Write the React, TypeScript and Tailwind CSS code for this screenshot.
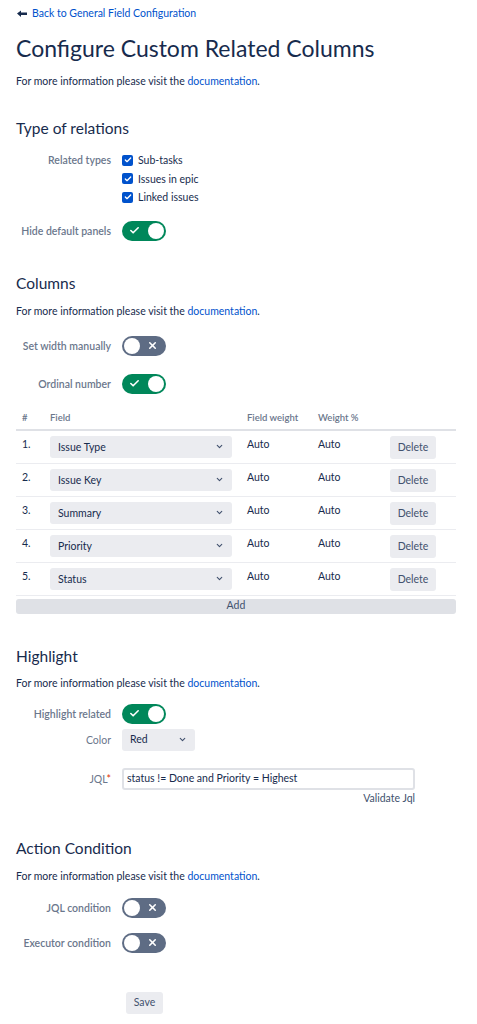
import { Check, X, ChevronDown } from 'lucide-react';

const FONT = { fontFamily: 'Lato, "Noto Sans", sans-serif' };

const ROWS = ['Issue Type', 'Issue Key', 'Summary', 'Priority', 'Status'];

function Toggle({ on }: { on: boolean }) {
  return on ? (
    <div className="flex h-[20px] w-[44px] items-center justify-between rounded-full bg-[#00875a] pl-[7px] pr-[2px]">
      <Check className="h-[11px] w-[11px] text-white" strokeWidth={3.5} />
      <div className="h-[16px] w-[16px] rounded-full bg-white" />
    </div>
  ) : (
    <div className="flex h-[20px] w-[44px] items-center justify-between rounded-full bg-[#5e6c84] pl-[2px] pr-[8px]">
      <div className="h-[16px] w-[16px] rounded-full bg-white" />
      <X className="h-[11px] w-[11px] text-white" strokeWidth={3.5} />
    </div>
  );
}

function Row({ label, children, className = '' }: { label: React.ReactNode; children: React.ReactNode; className?: string }) {
  return (
    <div className={`flex items-center ${className}`}>
      <div className="w-[95px] shrink-0 whitespace-nowrap text-right text-[10.5px] font-semibold leading-[16px] text-[#6b778c]">{label}</div>
      <div className="ml-[11px]">{children}</div>
    </div>
  );
}

function DocLine({ className = '' }: { className?: string }) {
  return (
    <p className={`text-[10.5px] leading-[16px] text-[#172b4d] ${className}`}>
      For more information please visit the <span className="text-[#0052cc]">documentation</span>.
    </p>
  );
}

function Heading({ children, className = '' }: { children: React.ReactNode; className?: string }) {
  return <h2 className={`text-[15.5px] leading-[22px] text-[#172b4d] ${className}`}>{children}</h2>;
}

function CheckBox({ label }: { label: string }) {
  return (
    <div className="flex h-[18.5px] items-center gap-[5px]">
      <div className="flex h-[11px] w-[11px] items-center justify-center rounded-[2px] bg-[#0052cc]">
        <Check className="h-[8px] w-[8px] text-white" strokeWidth={4} />
      </div>
      <span className="text-[10.5px] leading-[16px] text-[#172b4d]">{label}</span>
    </div>
  );
}

export default function App() {
  return (
    <div style={FONT} className="min-h-[1024px] bg-white px-[16px] pt-[6px] text-[#172b4d]">
      <div className="flex h-[16px] items-center gap-[5px] pl-[1px] text-[10.5px] text-[#0052cc]">
        <svg width="10" height="8" viewBox="0 0 10 8" className="text-[#172b4d]">
          <path d="M0 3.5 L4 0.5 V2.5 H10 V5 H4 V7 Z" fill="currentColor" />
        </svg>
        <span>Back to General Field Configuration</span>
      </div>

      <h1 className="mt-[11px] text-[23px] leading-[30px] text-[#172b4d]">Configure Custom Related Columns</h1>
      <DocLine className="mt-[10px]" />

      <Heading className="mt-[28px]">Type of relations</Heading>
      <div className="mt-[12px] flex">
        <div className="w-[95px] whitespace-nowrap pt-[1px] text-right text-[10.5px] font-semibold leading-[16px] text-[#6b778c]">
          Related types
        </div>
        <div className="ml-[11px]">
          <CheckBox label="Sub-tasks" />
          <CheckBox label="Issues in epic" />
          <CheckBox label="Linked issues" />
        </div>
      </div>
      <Row label="Hide default panels" className="mt-[14px]">
        <Toggle on />
      </Row>

      <Heading className="mt-[31px]">Columns</Heading>
      <DocLine className="mt-[9px]" />
      <Row label="Set width manually" className="mt-[17px]">
        <Toggle on={false} />
      </Row>
      <Row label="Ordinal number" className="mt-[18px]">
        <Toggle on />
      </Row>

      <div className="mt-[15px] w-[440px]">
        <div className="flex h-[22px] items-center border-b-2 border-[#dfe1e6] text-[9.5px] font-semibold text-[#6b778c]">
          <div className="w-[34px] pl-[6px]">#</div>
          <div className="w-[197px]">Field</div>
          <div className="w-[71px]">Field weight</div>
          <div>Weight %</div>
        </div>
        {ROWS.map((r, i) => (
          <div key={r} className="flex h-[33px] border-b border-[#ebecf0] pt-[5px] text-[10.5px] leading-[16px]">
            <div className="w-[34px] pl-[6px]">{i + 1}.</div>
            <div className="flex h-[22px] w-[182px] items-center justify-between rounded-[3px] bg-[#ebecf0] pl-[8px] pr-[8px]">
              <span>{r}</span>
              <ChevronDown className="h-[9px] w-[9px] text-[#42526e]" strokeWidth={3} />
            </div>
            <div className="ml-[15px] w-[71px]">Auto</div>
            <div className="w-[72px]">Auto</div>
            <div className="flex h-[23px] w-[46px] items-center justify-center rounded-[3px] bg-[#ebecf0] text-[#42526e]">Delete</div>
          </div>
        ))}
        <div className="mt-[3px] flex h-[15px] w-[440px] items-center justify-center rounded-[3px] bg-[#dfe1e6] text-[10.5px] text-[#42526e]">
          Add
        </div>
      </div>

      <Heading className="mt-[31px]">Highlight</Heading>
      <DocLine className="mt-[8px]" />
      <Row label="Highlight related" className="mt-[13px]">
        <Toggle on />
      </Row>
      <Row label={<span className="font-normal">Color</span>} className="mt-[5px]">
        <div className="flex h-[22px] w-[73px] items-center justify-between rounded-[3px] bg-[#ebecf0] px-[8px] text-[10.5px]">
          <span>Red</span>
          <ChevronDown className="h-[9px] w-[9px] text-[#42526e]" strokeWidth={3} />
        </div>
      </Row>
      <div className="mt-[17px] flex">
        <div className="w-[95px] pt-[3px] text-right text-[10.5px] leading-[16px] text-[#6b778c]">
          JQL<span className="text-[#de350b]">*</span>
        </div>
        <div className="ml-[11px] w-[293px]">
          <div className="flex h-[22px] items-center rounded-[3px] border-2 border-[#dfe1e6] px-[3px] text-[10.5px]">
            status != Done and Priority = Highest
          </div>
          <div className="text-right text-[10.5px] leading-[16px] text-[#42526e]">Validate Jql</div>
        </div>
      </div>

      <Heading className="mt-[31px]">Action Condition</Heading>
      <DocLine className="mt-[9px]" />
      <Row label="JQL condition" className="mt-[14px]">
        <Toggle on={false} />
      </Row>
      <Row label="Executor condition" className="mt-[15px]">
        <Toggle on={false} />
      </Row>

      <div className="ml-[110px] mt-[39px] flex h-[22px] w-[37px] items-center justify-center rounded-[3px] bg-[#ebecf0] text-[10.5px] text-[#42526e]">
        Save
      </div>
    </div>
  );
}
